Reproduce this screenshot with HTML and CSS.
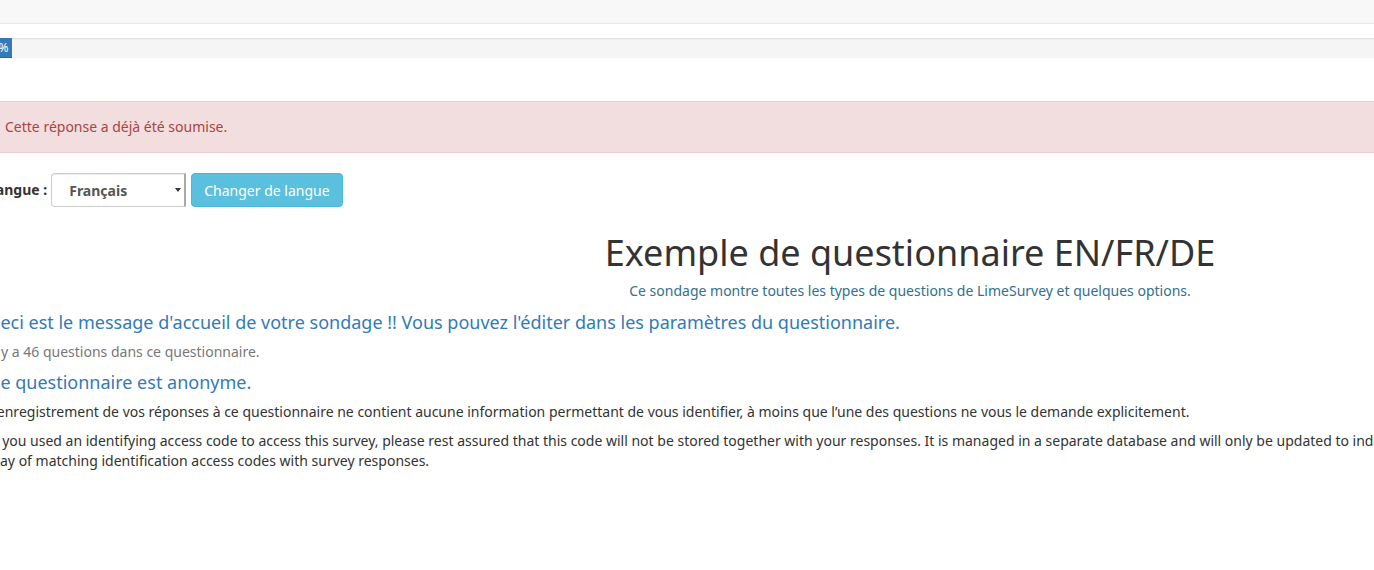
FILE: index.html
```html
<!DOCTYPE html>
<html lang="fr">
<head>
<meta charset="utf-8">
<title>Exemple de questionnaire EN/FR/DE</title>
<link rel="stylesheet" href="styles.css">
</head>
<body>
<nav class="navbar"></nav>
<div class="page">
  <div class="progress"><div class="progress-bar">0%</div></div>
  <div class="alert">Cette réponse a déjà été soumise.</div>
  <form class="lang-row">
    <label class="lang-label" for="lang">Langue :</label>
    <span class="select-wrap">
      <select id="lang" class="lang-select"><option>Français</option></select>
      <span class="select-arrow"></span>
    </span>
    <button type="button" class="btn-info">Changer de langue</button>
  </form>
  <h1 class="survey-title">Exemple de questionnaire EN/FR/DE</h1>
  <div class="survey-desc">Ce sondage montre toutes les types de questions de LimeSurvey et quelques options.</div>
  <h3 class="welcome">Ceci est le message d'accueil de votre sondage !! Vous pouvez l'éditer dans les paramètres du questionnaire.</h3>
  <div class="count">Il y a 46 questions dans ce questionnaire.</div>
  <h3 class="anon">Ce questionnaire est anonyme.</h3>
  <p class="privacy">L’enregistrement de vos réponses à ce questionnaire ne contient aucune information permettant de vous identifier, à moins que l’une des questions ne vous le demande explicitement.</p>
  <p class="privacy">If you used an identifying access code to access this survey, please rest assured that this code will not be stored together with your responses. It is managed in a separate database and will only be updated to indicate whether you did (or did not) finish this survey. There is no way of matching identification access codes with survey responses.</p>
</div>
</body>
</html>
```
FILE: styles.css
```css
html, body {
  overflow: hidden;
}
body {
  margin: 0;
  font-family: "Noto Sans", "DejaVu Sans", sans-serif;
  font-size: 14px;
  line-height: 20px;
  color: #333;
  background: #fff;
}
.navbar {
  height: 23px;
  background: #f8f8f8;
  border-bottom: 1px solid #e7e7e7;
}
.page {
  margin-left: -11px;
  width: 1842px;
}
.progress {
  margin-top: 14px;
  height: 20px;
  background: #f5f5f5;
  border-radius: 4px;
  box-shadow: inset 0 1px 2px rgba(0,0,0,.1);
  overflow: hidden;
  margin-left: -1px;
}
.progress-bar {
  width: 24px;
  height: 20px;
  background: #337ab7;
  color: #fff;
  font-size: 12px;
  line-height: 20px;
  text-align: center;
  box-shadow: inset 0 -1px 0 rgba(0,0,0,.15);
}
.alert {
  margin-top: 43px;
  padding: 15px;
  background: #f2dede;
  border: 1px solid #ebccd1;
  color: #a94442;
}
.lang-row {
  margin: 20px 0 0 -1px;
  display: flex;
  align-items: center;
  height: 34px;
}
.lang-label {
  font-weight: bold;
  margin-right: 4px;
}
.select-wrap {
  position: relative;
  display: inline-block;
  width: 135px;
  height: 34px;
}
.lang-select {
  appearance: none;
  -webkit-appearance: none;
  width: 135px;
  height: 34px;
  border: 1px solid #ccc;
  border-right: 2px solid #a9a9a9;
  border-radius: 4px 0 0 4px;
  background: #fff;
  color: #555;
  font-family: inherit;
  font-size: 14px;
  font-weight: bold;
  padding: 0 0 0 17px;
  box-shadow: inset 0 1px 1px rgba(0,0,0,.075);
}
.select-arrow {
  position: absolute;
  right: 5px;
  top: 15px;
  width: 0;
  height: 0;
  border-left: 3px solid transparent;
  border-right: 3px solid transparent;
  border-top: 4px solid #333;
  pointer-events: none;
}
.btn-info {
  margin-left: 5px;
  height: 34px;
  padding: 0 12px;
  background: #5bc0de;
  border: 1px solid #46b8da;
  border-radius: 4px;
  color: #fff;
  font-family: inherit;
  font-size: 14px;
}
.survey-title {
  margin: 26px 0 0 0;
  font-size: 36px;
  font-weight: 400;
  line-height: 40px;
  text-align: center;
  color: #333;
}
.survey-desc {
  margin-top: 8px;
  text-align: center;
  color: #31708f;
  font-size: 14px;
}
.welcome, .anon {
  margin: 10px 0 0 0;
  font-size: 18px;
  font-weight: 400;
  line-height: 22px;
  color: #337ab7;
}
.count {
  margin-top: 9px;
  color: #777;
}
.anon {
  margin-top: 9px;
}
.privacy {
  margin: 9px 25px 9px 0;
}
```
